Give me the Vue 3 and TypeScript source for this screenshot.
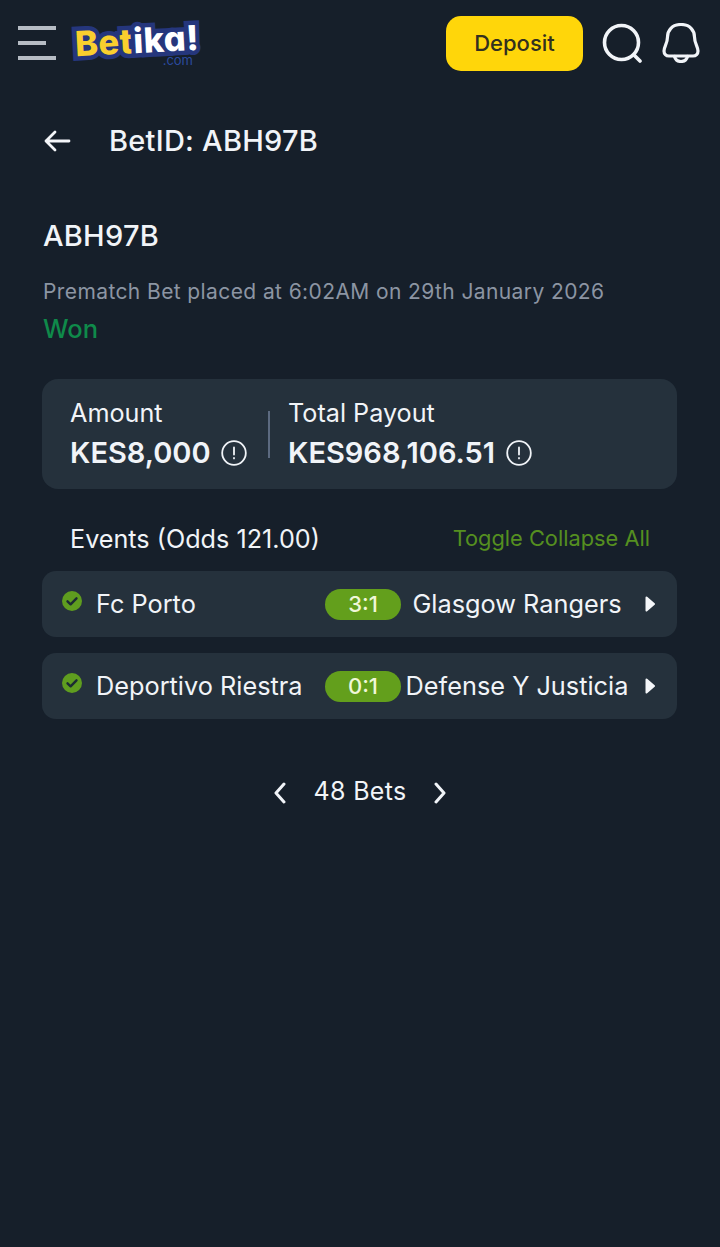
<template>
  <div class="page">
    <header class="topbar">
      <button class="menu-btn" aria-label="menu">
        <span class="bar"></span>
        <span class="bar short"></span>
        <span class="bar"></span>
      </button>
      <div class="logo">
        <div class="logo-plate">
          <span class="logo-bet">Bet</span><span class="logo-ika">ika!</span>
        </div>
        <span class="logo-com">.com</span>
      </div>
      <button class="deposit">Deposit</button>
      <svg class="search-icon" viewBox="0 0 40 40" fill="none" stroke="#f1f4f8" stroke-width="3.6" stroke-linecap="round">
        <circle cx="19.5" cy="19.5" r="17" />
        <path d="M32 32l6 6" />
      </svg>
      <svg class="bell-icon" viewBox="0 0 38 40" fill="none" stroke="#f1f4f8" stroke-width="3.200" stroke-linecap="round" stroke-linejoin="round">
        <path d="M19 1.500C10 1.500 5.500 7.500 5.500 14C5.500 20.500 2 23.500 2 28C2 31 4 33 7 33H31C34 33 36 31 36 28C36 23.500 32.500 20.500 32.500 14C32.500 7.500 28 1.500 19 1.500z" />
        <path d="M12.500 33.500c1 3.500 3.500 5 6.500 5s5.500-1.500 6.500-5" />
      </svg>
    </header>

    <div class="title-row">
      <svg class="back-icon" viewBox="0 0 28 24" fill="none" stroke="#f4f6f9" stroke-width="2.800" stroke-linecap="round" stroke-linejoin="round">
        <path d="M26 12H3M12 3l-9 9 9 9" />
      </svg>
      <h1 class="title">BetID: {{ bet.id }}</h1>
    </div>

    <section class="summary">
      <h2 class="bet-id">{{ bet.id }}</h2>
      <p class="placed">Prematch Bet placed at 6:02AM on 29th January 2026</p>
      <p class="status">Won</p>
    </section>

    <section class="totals">
      <div class="total amount">
        <span class="total-label">Amount</span>
        <span class="total-value">
          KES8,000
          <svg class="info-icon" viewBox="0 0 26 26" fill="none" stroke="#f1f4f8" stroke-width="1.800" stroke-linecap="round">
            <circle cx="13" cy="13" r="11.800" />
            <path d="M13 7.500v7M13 18v.4" />
          </svg>
        </span>
      </div>
      <div class="divider"></div>
      <div class="total">
        <span class="total-label">Total Payout</span>
        <span class="total-value">
          KES968,106.51
          <svg class="info-icon" viewBox="0 0 26 26" fill="none" stroke="#f1f4f8" stroke-width="1.800" stroke-linecap="round">
            <circle cx="13" cy="13" r="11.800" />
            <path d="M13 7.500v7M13 18v.4" />
          </svg>
        </span>
      </div>
    </section>

    <div class="events-head">
      <span class="events-title">Events (Odds 121.00)</span>
      <span class="toggle">Toggle Collapse All</span>
    </div>

    <div class="events">
      <div v-for="ev in events" :key="ev.home" class="event">
        <svg class="check-icon" viewBox="0 0 20 20">
          <circle cx="10" cy="10" r="10" fill="#5f9d1f" />
          <path d="M5.500 10.300l3.100 3 5.900-6" fill="none" stroke="#1c2b33" stroke-width="2.400" stroke-linecap="round" stroke-linejoin="round" />
        </svg>
        <span class="home">{{ ev.home }}</span>
        <span class="score">{{ ev.score }}</span>
        <span class="away">{{ ev.away }}</span>
        <svg class="caret-icon" viewBox="0 0 10 16">
          <path d="M1.500 1.500l7.500 6.500-7.500 6.500z" fill="#f4f6f9" stroke="#f4f6f9" stroke-width="2" stroke-linejoin="round" />
        </svg>
      </div>
    </div>

    <nav class="pager">
      <svg class="pager-icon" viewBox="0 0 14 22" fill="none" stroke="#f1f4f8" stroke-width="3" stroke-linecap="round" stroke-linejoin="round">
        <path d="M11 2L3 11l8 9" />
      </svg>
      <span class="pager-text">48 Bets</span>
      <svg class="pager-icon" viewBox="0 0 14 22" fill="none" stroke="#f1f4f8" stroke-width="3" stroke-linecap="round" stroke-linejoin="round">
        <path d="M3 2l8 9-8 9" />
      </svg>
    </nav>
  </div>
</template>

<script setup lang="ts">
interface BetEvent {
  home: string
  score: string
  away: string
}

const bet = { id: 'ABH97B' }

const events: BetEvent[] = [
  { home: 'Fc Porto', score: '3:1', away: 'Glasgow Rangers' },
  { home: 'Deportivo Riestra', score: '0:1', away: 'Defense Y Justicia' },
]
</script>

<style>
html,
body {
  margin: 0;
  background: #161f2a;
}
</style>

<style scoped>
.page {
  min-height: 1247px;
  background: #161f2a;
  color: #f1f4f8;
  font-family: Inter, "Liberation Sans", sans-serif;
  box-sizing: border-box;
}

.topbar {
  display: flex;
  align-items: center;
  height: 86px;
  padding: 0 20px 0 18px;
}

.menu-btn {
  display: flex;
  flex-direction: column;
  gap: 11px;
  width: 38px;
  padding: 0;
  border: 0;
  background: none;
}

.bar {
  display: block;
  width: 38px;
  height: 4px;
  background: #b6bcc4;
}

.bar.short {
  width: 28px;
}

.logo {
  display: flex;
  flex-direction: column;
  align-items: center;
  width: 127px;
  margin: 4px 0 0 18px;
}

.logo-plate {
  transform: rotate(-3deg);
  font-size: 34.500px;
  line-height: 36px;
  font-weight: 800;
  letter-spacing: 0.500px;
  font-feature-settings: "cv11";
  white-space: nowrap;
  paint-order: stroke fill;
  -webkit-text-stroke: 9px #25367c;
}

.logo-bet {
  color: #f9cf2e;
}

.logo-ika {
  color: #ffffff;
}

.logo-com {
  align-self: flex-end;
  margin: -5px 8px 0 0;
  font-size: 13px;
  line-height: 13px;
  color: #2b4a9f;
}

.deposit {
  width: 137px;
  height: 55px;
  margin-left: auto;
  border: 0;
  border-radius: 15px;
  background: #ffd60a;
  color: #33301f;
  font-family: inherit;
  font-size: 22px;
  font-weight: 500;
}

.search-icon {
  width: 40px;
  height: 40px;
  margin-left: 19px;
}

.bell-icon {
  width: 38px;
  height: 40px;
  margin-left: 20px;
}

.title-row {
  display: flex;
  align-items: center;
  height: 40px;
  margin-top: 35px;
  padding-left: 43px;
}

.back-icon {
  width: 28px;
  height: 24px;
}

.title {
  margin: 0 0 0 38px;
  font-size: 29px;
  line-height: 40px;
  font-weight: 500;
  letter-spacing: 0.250px;
}

.summary {
  margin-top: 55px;
  padding: 0 43px;
}

.bet-id {
  margin: 0;
  font-size: 29px;
  line-height: 40px;
  font-weight: 500;
  letter-spacing: 0.250px;
}

.placed {
  margin: 21px 0 0;
  font-size: 21px;
  line-height: 30px;
  letter-spacing: 0.400px;
  color: #8c95a3;
}

.status {
  margin: 7px 0 0;
  font-size: 25.500px;
  line-height: 30px;
  font-weight: 500;
  color: #0f8a4a;
}

.totals {
  display: flex;
  align-items: center;
  height: 110px;
  margin: 35px 43px 0 42px;
  padding-left: 28px;
  background: #25313c;
  border-radius: 16px;
}

.total {
  display: flex;
  flex-direction: column;
  gap: 7px;
}

.total.amount {
  width: 198px;
}

.total-label {
  font-size: 25.200px;
  line-height: 30px;
}

.total-value {
  display: flex;
  align-items: center;
  gap: 10.500px;
  font-size: 29px;
  line-height: 36px;
  font-weight: 600;
  white-space: nowrap;
}

.info-icon {
  width: 26px;
  height: 26px;
}

.divider {
  width: 2px;
  height: 47px;
  margin-right: 18px;
  background: #5c6a80;
}

.events-head {
  display: flex;
  align-items: center;
  justify-content: space-between;
  height: 40px;
  margin-top: 30px;
  padding: 0 70px 0 70px;
}

.events-title {
  font-size: 25.200px;
  line-height: 38px;
}

.toggle {
  margin-top: -2px;
  font-size: 21.800px;
  color: #558f20;
}

.events {
  display: flex;
  flex-direction: column;
  gap: 16px;
  margin: 12px 43px 0 42px;
}

.event {
  display: flex;
  align-items: center;
  height: 66px;
  padding-left: 20px;
  background: #25313c;
  border-radius: 14px;
  font-size: 25.300px;
}

.check-icon {
  flex: none;
  width: 20px;
  height: 20px;
  margin: -6px 14px 0 0;
}

.home,
.away {
  margin-top: -2px;
}

.home {
  width: 229px;
  white-space: nowrap;
}

.score {
  flex: none;
  width: 76px;
  height: 31px;
  line-height: 31px;
  text-align: center;
  border-radius: 16px;
  background: #639f1c;
  color: #f0f7d8;
  font-size: 22px;
  font-weight: 500;
}

.away {
  flex: 1;
  text-align: center;
  white-space: nowrap;
}

.caret-icon {
  flex: none;
  width: 10px;
  height: 16px;
  margin: 0 22px 0 12px;
}

.pager {
  display: flex;
  align-items: center;
  justify-content: center;
  gap: 27px;
  height: 40px;
  margin-top: 52px;
}

.pager-icon {
  width: 14px;
  height: 22px;
  margin-top: 4px;
}

.pager-text {
  font-size: 25px;
  letter-spacing: 0.300px;
}
</style>
